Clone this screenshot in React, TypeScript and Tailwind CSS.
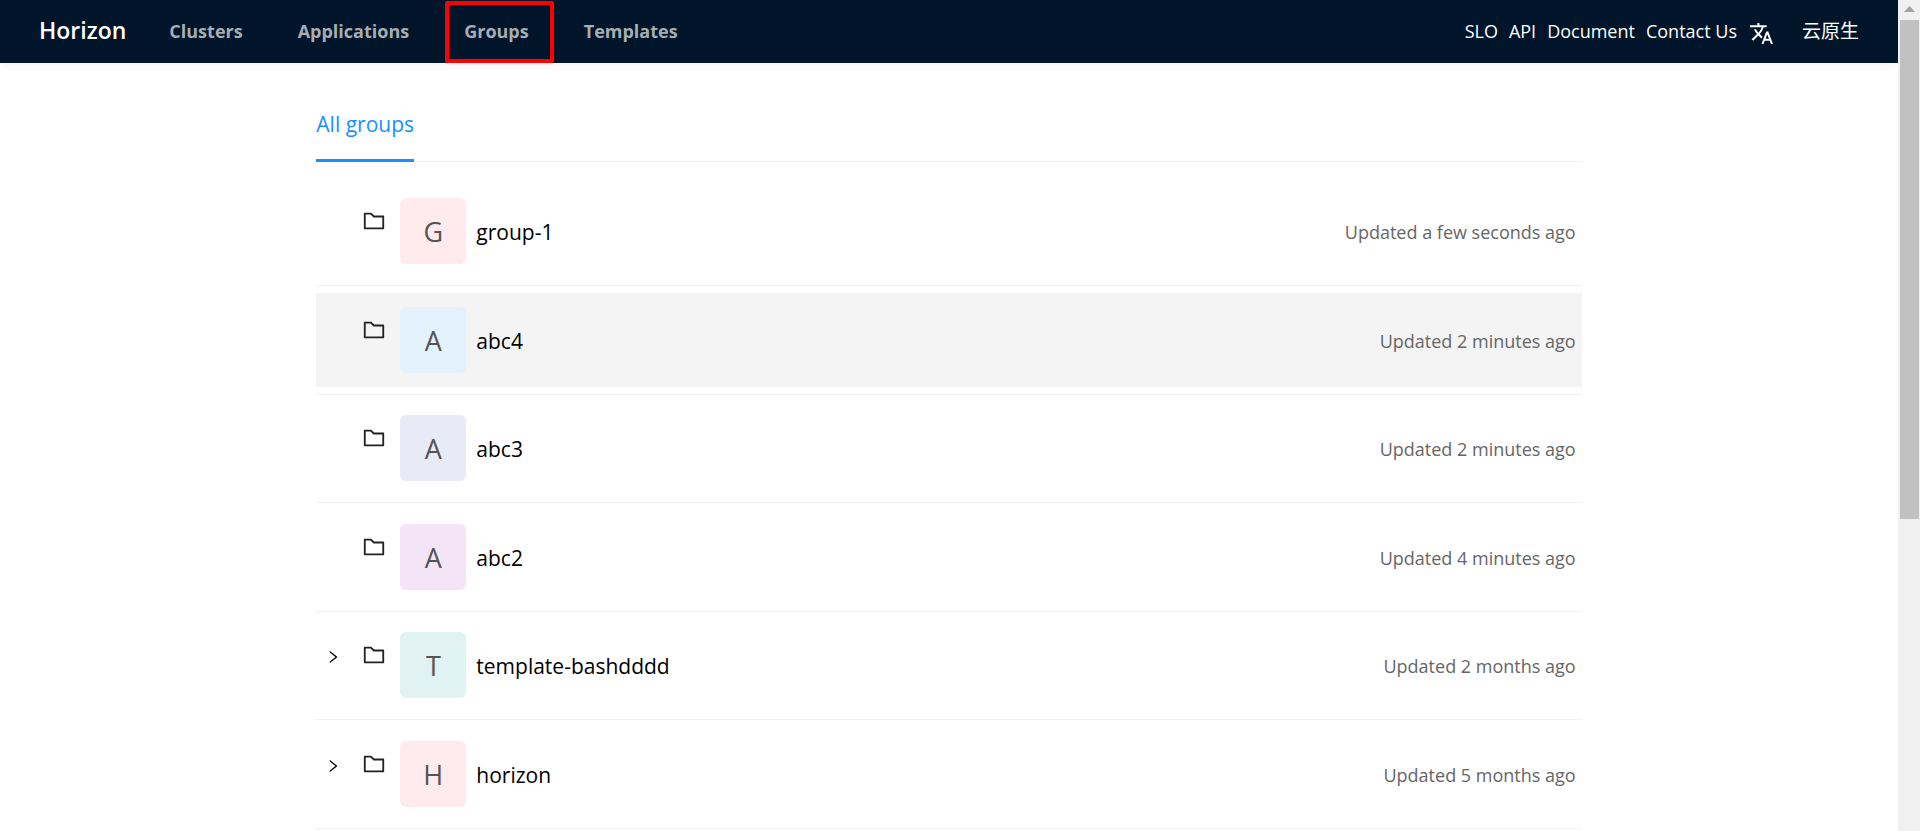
import React from "react";
import { AiOutlineFolder, AiOutlineRight } from "react-icons/ai";
import { MdTranslate } from "react-icons/md";

type Group = {
  name: string;
  updated: string;
  tint: string;
  expandable?: boolean;
  active?: boolean;
};

const groups: Group[] = [
  { name: "group-1", updated: "Updated a few seconds ago", tint: "bg-[#ffebee]" },
  { name: "abc4", updated: "Updated 2 minutes ago", tint: "bg-[#e3f2fd]", active: true },
  { name: "abc3", updated: "Updated 2 minutes ago", tint: "bg-[#e8eaf6]" },
  { name: "abc2", updated: "Updated 4 minutes ago", tint: "bg-[#f3e5f5]" },
  { name: "template-bashdddd", updated: "Updated 2 months ago", tint: "bg-[#e0f2f1]", expandable: true },
  { name: "horizon", updated: "Updated 5 months ago", tint: "bg-[#ffebee]", expandable: true },
];

const links = ["SLO", "API", "Document", "Contact Us"];

function NavLink({ label, marked = false }: { label: string; marked?: boolean }) {
  return (
    <a
      href="#"
      className={`flex h-full items-center border-4 pr-[21px] pb-0.5 pl-[15px] ${marked ? "rounded-xs border-[#ff0000]" : "border-transparent"}`}
    >
      {label}
    </a>
  );
}

function Header() {
  return (
    <header className="flex h-[63px] shrink-0 items-center justify-between bg-[#001529] px-[39px] text-white shadow-[0_2px_8px_#f0f1f2]">
      <div className="flex h-full items-center">
        <a href="#" className="pb-0.5 text-[23px] font-semibold">
          Horizon
        </a>
        <nav className="ml-6 flex h-full items-center gap-[11px] pt-px text-lg font-bold text-[#a6adb4]">
          <NavLink label="Clusters" />
          <NavLink label="Applications" />
          <NavLink label="Groups" marked />
          <NavLink label="Templates" />
        </nav>
      </div>
      <div className="flex items-center text-lg">
        <nav className="flex gap-[11px]">
          {links.map((l) => (
            <a key={l} href="#">
              {l}
            </a>
          ))}
        </nav>
        <button type="button" aria-label="Language" className="ml-3 pt-1">
          <MdTranslate size={25} />
        </button>
        <button type="button" className="ml-7 text-[19px]">
          云原生
        </button>
      </div>
    </header>
  );
}

function GroupRow({ group }: { group: Group }) {
  return (
    <li className="group border-b border-[#f0f0f0] py-[7px]">
      <div
        className={`flex items-center pt-[13px] pr-1.5 pb-3.5 group-even:pt-3.5 ${group.active ? "bg-[#f4f4f4]" : ""}`}
      >
        <div className="flex w-[45px] shrink-0 justify-center self-start pt-[17px] pr-3">
          {group.expandable && (
            <button type="button" aria-label={`Expand ${group.name}`}>
              <AiOutlineRight size={16} />
            </button>
          )}
        </div>
        <AiOutlineFolder size={26} className="mt-2.5 shrink-0 self-start text-[#222222]" />
        <div
          className={`ml-[13px] flex size-[66px] shrink-0 items-center justify-center rounded-md pt-0.5 text-[27px] text-[#555555] ${group.tint}`}
        >
          {group.name[0].toUpperCase()}
        </div>
        <a href="#" className="ml-2.5 pt-1 text-[21px] text-black">
          {group.name}
        </a>
        <span className="ml-auto pt-0.5 text-lg text-[#666666]">{group.updated}</span>
      </div>
    </li>
  );
}

function ScrollRail() {
  return (
    <div aria-hidden="true" className="flex w-[22px] shrink-0 flex-col items-center bg-[#f0f0f0]">
      <svg width="22" height="20" viewBox="0 0 22 20" className="shrink-0">
        <path d="M11.5 6 17 12H6z" fill="#a3a3a3" />
      </svg>
      <div className="h-3/5 w-[19px] bg-[#c1c1c1]" />
    </div>
  );
}

export default function App() {
  return (
    <div className="flex h-screen overflow-hidden bg-white font-['Open_Sans','Noto_Sans_CJK_SC',sans-serif]">
      <div className="flex min-w-0 grow flex-col overflow-hidden">
        <Header />
        <main className="mx-auto w-2/3 pt-[30px]">
          <div role="tablist" className="flex border-b border-[#f0f0f0]">
            <button
              type="button"
              role="tab"
              aria-selected="true"
              className="-mb-px h-[69px] border-b-3 border-[#1890ff] pb-0.5 text-[21px] text-[#1890ff]"
            >
              All groups
            </button>
          </div>
          <ul className="pt-4">
            {groups.map((g) => (
              <GroupRow key={g.name} group={g} />
            ))}
          </ul>
        </main>
      </div>
      <ScrollRail />
    </div>
  );
}
